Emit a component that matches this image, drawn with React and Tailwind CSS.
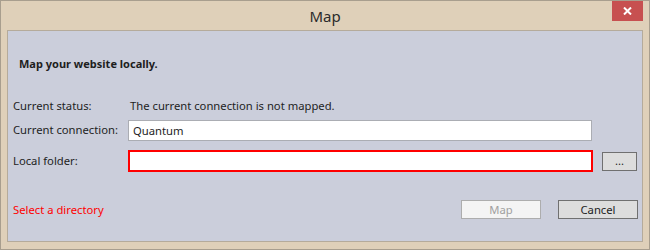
export default function App() {
  const font = { fontFamily: '"Noto Sans", "Liberation Sans", sans-serif' };

  return (
    <div
      className="w-[650px] h-[250px] bg-[#dfd0b9] border border-[#a89e8e] flex flex-col text-[11.25px] text-[#1e1e1e]"
      style={font}
    >
      {/* title bar */}
      <div className="h-[29px] grid grid-cols-[1fr_auto_1fr] items-start">
        <div />
        <div className="pt-[6px] text-[15px] leading-[18px] text-[#2b2b2b]">Map</div>
        <div className="flex justify-end pr-[6px]">
          <button className="w-[31px] h-[20px] bg-[#c75050] flex items-center justify-center">
            <svg width="9" height="8" viewBox="0 0 9 8">
              <path d="M1 0.5 L8 7.5 M8 0.5 L1 7.5" stroke="white" strokeWidth="2" />
            </svg>
          </button>
        </div>
      </div>

      {/* content panel */}
      <div className="flex-1 ml-[6px] mr-[6px] mb-[7px] bg-[#cbcedb] border border-[#b5ab9b] flex flex-col pr-[4px]">
        <div className="mt-[25px] pl-[11px] font-bold text-[11px] leading-[16px]">Map your website locally.</div>

        <div className="mt-[26px] flex items-center leading-[16px]">
          <div className="w-[120px] pl-[5px]">Current status:</div>
          <div className="pl-[2px]">The current connection is not mapped.</div>
        </div>

        <div className="mt-[6px] flex items-center">
          <div className="w-[120px] pl-[5px]">Current connection:</div>
          <div className="w-[464px] h-[21px] bg-white border border-[#abadb3] flex items-center pl-[4px] leading-[16px]">
            Quantum
          </div>
        </div>

        <div className="mt-[9px] flex items-center">
          <div className="w-[120px] pl-[5px]">Local folder:</div>
          <div className="w-[465px] h-[22px] bg-white border-2 border-[#ff0000]" />
          <button className="ml-[9px] w-[35px] h-[19px] bg-[#dddddd] border border-[#707070] flex items-center justify-center leading-[12px]">
            ...
          </button>
        </div>

        <div className="mt-[28px] flex items-center">
          <div className="flex-1 pl-[5px] text-[#ff0000] leading-[16px]">Select a directory</div>
          <button className="w-[80px] h-[19px] bg-[#f4f4f4] border border-[#adadad] text-[#a0a0a0] flex items-center justify-center leading-[16px]">
            Map
          </button>
          <button className="ml-[17px] w-[80px] h-[19px] bg-[#dddddd] border border-[#707070] flex items-center justify-center leading-[16px]">
            Cancel
          </button>
        </div>
      </div>
    </div>
  );
}
